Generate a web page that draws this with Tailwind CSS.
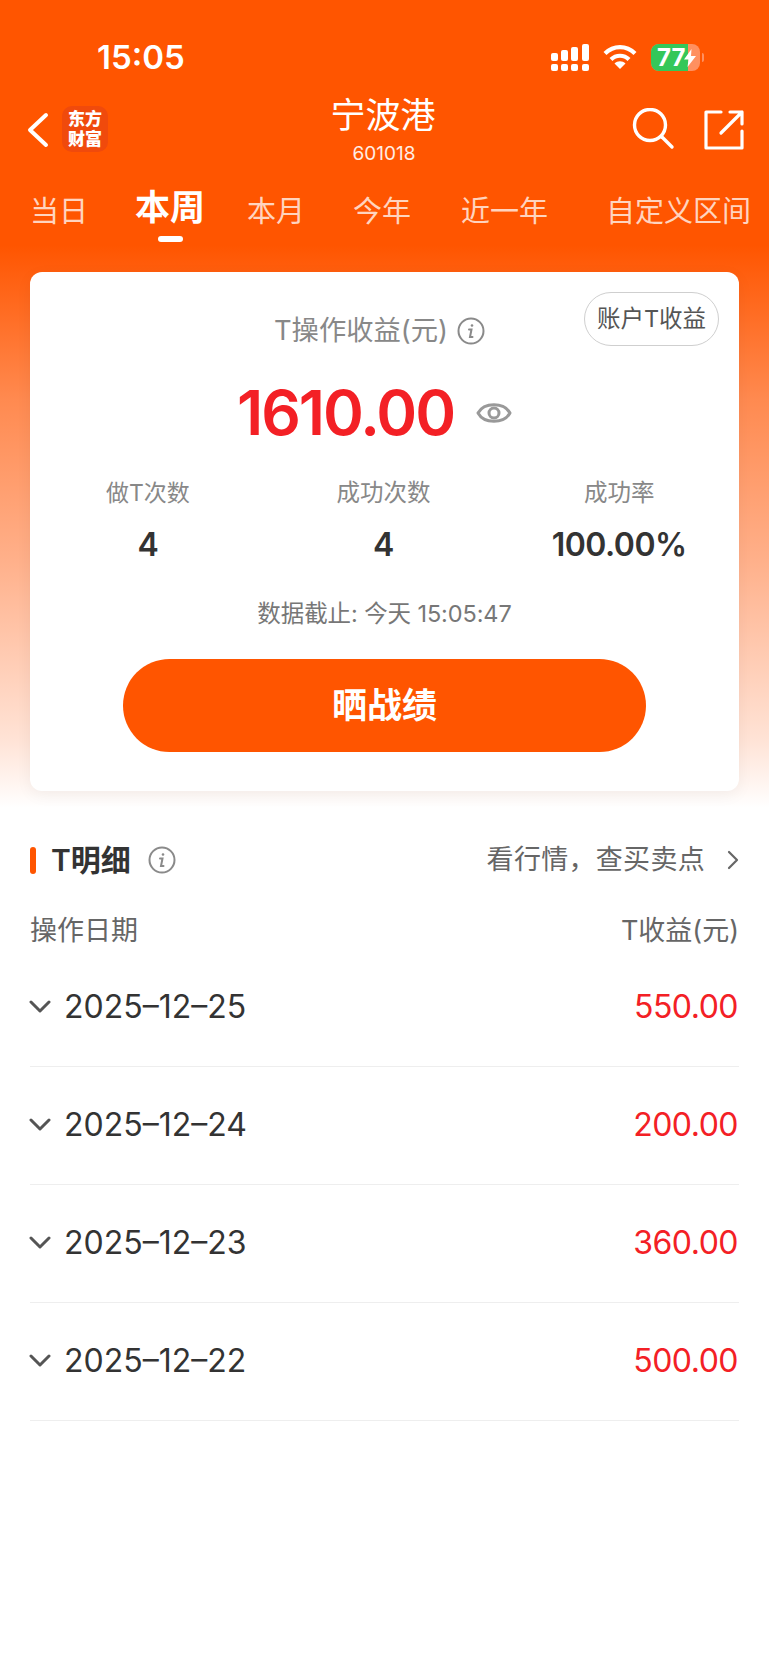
<!DOCTYPE html>
<html lang="zh">
<head>
<meta charset="utf-8">
<script src="https://cdn.jsdelivr.net/npm/@tailwindcss/browser@4"></script>
</head>
<body class="bg-white">
<div class="w-[769px] h-[1665px] overflow-hidden font-['Inter','Noto_Sans_CJK_SC',sans-serif] bg-[linear-gradient(to_bottom,#ff5500_0px,#ff5500_245px,#ff8a50_400px,#ffb08a_560px,#ffe3d6_740px,#ffffff_808px)]">

  <!-- Status bar -->
  <div class="h-[92px] relative text-white">
    <div class="absolute left-[97px] top-[38px] text-[33px] leading-[38px] font-semibold">15:05</div>
    <svg class="absolute left-[551px] top-[44px]" width="38" height="27" viewBox="0 0 38 27" fill="#fff">
      <rect x="0" y="9" width="7" height="8" rx="2"/><rect x="10" y="6" width="7" height="11" rx="2"/><rect x="20" y="3" width="7" height="14" rx="2"/><rect x="31" y="0" width="7" height="17" rx="2"/>
      <rect x="0" y="20" width="7" height="7" rx="2"/><rect x="10" y="20" width="7" height="7" rx="2"/><rect x="20" y="20" width="7" height="7" rx="2"/><rect x="31" y="20" width="7" height="7" rx="2"/>
    </svg>
    <svg class="absolute left-[603px] top-[44px]" width="34" height="26" viewBox="0 0 34 26" fill="none" stroke="#fff" stroke-width="4.2">
      <path d="M2 9.500C10.500 1 23.500 1 32 9.500"/><path d="M8 15.500C13 10.500 21 10.500 26 15.500"/><path d="M17 25l-5.500-5.500c3-3 8-3 11 0z" fill="#fff" stroke="none"/>
    </svg>
    <div class="absolute left-[651px] top-[44px] w-[49px] h-[27px] rounded-[8px] overflow-hidden bg-[#ff9060] flex">
      <div class="w-[37px] h-full bg-[#34c759]"></div>
    </div>
    <div class="absolute left-[702px] top-[53px] w-[2px] h-[9px] rounded-r bg-[#ff9060]"></div>
    <div class="absolute left-[657px] top-[44px] text-[24px] leading-[27px] font-bold text-white">77</div>
    <svg class="absolute left-[684px] top-[49px]" width="12" height="18" viewBox="0 0 12 18" fill="#fff"><path d="M7.500 0L0 10.500h4.500L3.500 18 12 7H7z"/></svg>
  </div>

  <!-- Nav -->
  <div class="h-[74px] relative text-white">
    <svg class="absolute left-[27px] top-[20px]" width="22" height="36" viewBox="0 0 22 36" fill="none" stroke="#fff" stroke-width="4" stroke-linecap="round" stroke-linejoin="round"><path d="M19 3L3 18l16 15"/></svg>
    <div class="absolute left-[62px] top-[14px] w-[46px] h-[46px] rounded-[10px] bg-[#f04a0c] flex flex-col items-center justify-center text-[17px] leading-[20px] font-black">
      <span>东方</span><span>财富</span>
    </div>
    <div class="flex flex-col items-center pt-[2px] pr-[3px]">
      <div class="text-[35px] leading-[42px]">宁波港</div>
      <div class="text-[19px] leading-[24px] mt-[6px] ml-[2px] text-white/90">601018</div>
    </div>
    <svg class="absolute left-[632px] top-[16px]" width="44" height="44" viewBox="0 0 44 44" fill="none" stroke="#fff" stroke-width="3.400" stroke-linecap="round"><circle cx="18" cy="17" r="15.500"/><path d="M30 29l10 10"/></svg>
    <svg class="absolute left-[703px] top-[17px]" width="42" height="42" viewBox="0 0 42 42" fill="none" stroke="#fff" stroke-width="3.200" stroke-linecap="round" stroke-linejoin="round"><path d="M18 3H3v36h36V22"/><path d="M18 24L39 3M27 3h12v12"/></svg>
  </div>

  <!-- Period tabs -->
  <div class="h-[106px] flex items-start pl-[30px] text-[29px] leading-[36px] text-white/75 pt-[28px]">
    <span>当日</span>
    <span class="relative ml-[47px] -mt-[7px] text-[35px] leading-[40px] font-semibold text-white">本周<span class="absolute left-[23px] top-[49px] w-[25px] h-[6px] rounded-full bg-white"></span></span>
    <span class="ml-[42px]">本月</span>
    <span class="ml-[48px]">今年</span>
    <span class="ml-[50px]">近一年</span>
    <span class="ml-[58px]">自定义区间</span>
  </div>

  <!-- Summary card -->
  <div class="relative mx-[30px] h-[519px] rounded-[12px] bg-white shadow-[0_4px_16px_rgba(0,0,0,0.05)] flex flex-col items-center">
    <div class="absolute right-[20px] top-[20px] w-[135px] h-[54px] rounded-full border border-[#cfcfcf] flex items-center justify-center text-[23.500px] text-[#555]">账户T收益</div>
    <div class="mt-[41px] h-[36px] flex items-center gap-[9px] text-[27.300px] leading-[36px] text-[#888] pr-[10px]">
      <span>T操作收益(元)</span>
      <svg width="28" height="28" viewBox="0 0 28 28" fill="none" stroke="#8a8a8a" stroke-width="2"><circle cx="14" cy="14" r="12.500"/><path d="M12 12.500h2.500L13 20h2.500" stroke-linecap="round"/><circle cx="15" cy="8.500" r="1.300" fill="#8a8a8a" stroke="none"/></svg>
    </div>
    <div class="mt-[30px] h-[68px] flex items-center gap-[22px] pr-[20px]">
      <span class="text-[62px] leading-[68px] font-semibold tracking-[-2px] text-[#f32025]">1610.00</span>
      <svg width="36" height="28" viewBox="0 0 36 28" fill="none" stroke="#999" stroke-width="3" stroke-linejoin="round"><path d="M2 14C8 3 28 3 34 14C28 25 8 25 2 14z"/><circle cx="18" cy="14" r="5"/></svg>
    </div>
    <div class="mt-[30px] w-full grid grid-cols-3 text-center pr-[2px]">
      <div><div class="text-[23px] leading-[32px] text-[#888]">做T次数</div><div class="mt-[17px] text-[32px] leading-[38px] font-semibold tracking-[-0.5px] text-[#333]">4</div></div>
      <div><div class="text-[23.500px] leading-[32px] text-[#888]">成功次数</div><div class="mt-[17px] text-[32px] leading-[38px] font-semibold tracking-[-0.5px] text-[#333]">4</div></div>
      <div><div class="text-[23.500px] leading-[32px] text-[#888]">成功率</div><div class="mt-[17px] text-[32px] leading-[38px] font-semibold tracking-[-0.5px] text-[#333]">100.00%</div></div>
    </div>
    <div class="mt-[34px] text-[23.500px] leading-[32px] tracking-[-0.1px] text-[#777]">数据截止: 今天 15:05:47</div>
    <button class="mt-[29px] w-[523px] h-[93px] rounded-full bg-[#ff5500] text-white text-[35px] font-semibold">晒战绩</button>
  </div>

  <!-- T detail -->
  <div class="mt-[51px] mx-[30px] flex items-center h-[36px]">
    <div class="w-[6px] h-[27px] rounded-full bg-[#ff5500]"></div>
    <div class="ml-[15px] text-[30px] leading-[36px] font-semibold text-[#333]">T明细</div>
    <svg class="ml-[17px]" width="28" height="28" viewBox="0 0 28 28" fill="none" stroke="#8a8a8a" stroke-width="2"><circle cx="14" cy="14" r="12.500"/><path d="M12 12.500h2.500L13 20h2.500" stroke-linecap="round"/><circle cx="15" cy="8.500" r="1.300" fill="#8a8a8a" stroke="none"/></svg>
    <div class="ml-auto text-[27px] leading-[36px] tracking-[0.3px] text-[#666]">看行情，查买卖点</div>
    <svg class="ml-[22px]" width="12" height="20" viewBox="0 0 12 20" fill="none" stroke="#666" stroke-width="2.200" stroke-linecap="round" stroke-linejoin="round"><path d="M2 2l8 8-8 8"/></svg>
  </div>
  <div class="mt-[35px] mx-[30px] flex justify-between text-[27px] leading-[36px] text-[#666]">
    <span>操作日期</span><span>T收益(元)</span>
  </div>

  <div class="mx-[30px]">
    <div class="h-[118px] border-b border-[#eeeeee] flex items-center pb-[2px]">
      <svg class="-ml-[1px]" width="22" height="14" viewBox="0 0 22 14" fill="none" stroke="#555" stroke-width="3" stroke-linecap="round" stroke-linejoin="round"><path d="M2 2l9 9 9-9"/></svg>
      <span class="ml-[13px] text-[32px] text-[#333]">2025–12–25</span>
      <span class="ml-auto mr-[1px] text-[32px] tracking-[-0.5px] text-[#f32025]">550.00</span>
    </div>
    <div class="h-[118px] border-b border-[#eeeeee] flex items-center pb-[2px]">
      <svg class="-ml-[1px]" width="22" height="14" viewBox="0 0 22 14" fill="none" stroke="#555" stroke-width="3" stroke-linecap="round" stroke-linejoin="round"><path d="M2 2l9 9 9-9"/></svg>
      <span class="ml-[13px] text-[32px] text-[#333]">2025–12–24</span>
      <span class="ml-auto mr-[1px] text-[32px] tracking-[-0.5px] text-[#f32025]">200.00</span>
    </div>
    <div class="h-[118px] border-b border-[#eeeeee] flex items-center pb-[2px]">
      <svg class="-ml-[1px]" width="22" height="14" viewBox="0 0 22 14" fill="none" stroke="#555" stroke-width="3" stroke-linecap="round" stroke-linejoin="round"><path d="M2 2l9 9 9-9"/></svg>
      <span class="ml-[13px] text-[32px] text-[#333]">2025–12–23</span>
      <span class="ml-auto mr-[1px] text-[32px] tracking-[-0.5px] text-[#f32025]">360.00</span>
    </div>
    <div class="h-[118px] border-b border-[#eeeeee] flex items-center pb-[2px]">
      <svg class="-ml-[1px]" width="22" height="14" viewBox="0 0 22 14" fill="none" stroke="#555" stroke-width="3" stroke-linecap="round" stroke-linejoin="round"><path d="M2 2l9 9 9-9"/></svg>
      <span class="ml-[13px] text-[32px] text-[#333]">2025–12–22</span>
      <span class="ml-auto mr-[1px] text-[32px] tracking-[-0.5px] text-[#f32025]">500.00</span>
    </div>
  </div>
</div>
</body>
</html>
